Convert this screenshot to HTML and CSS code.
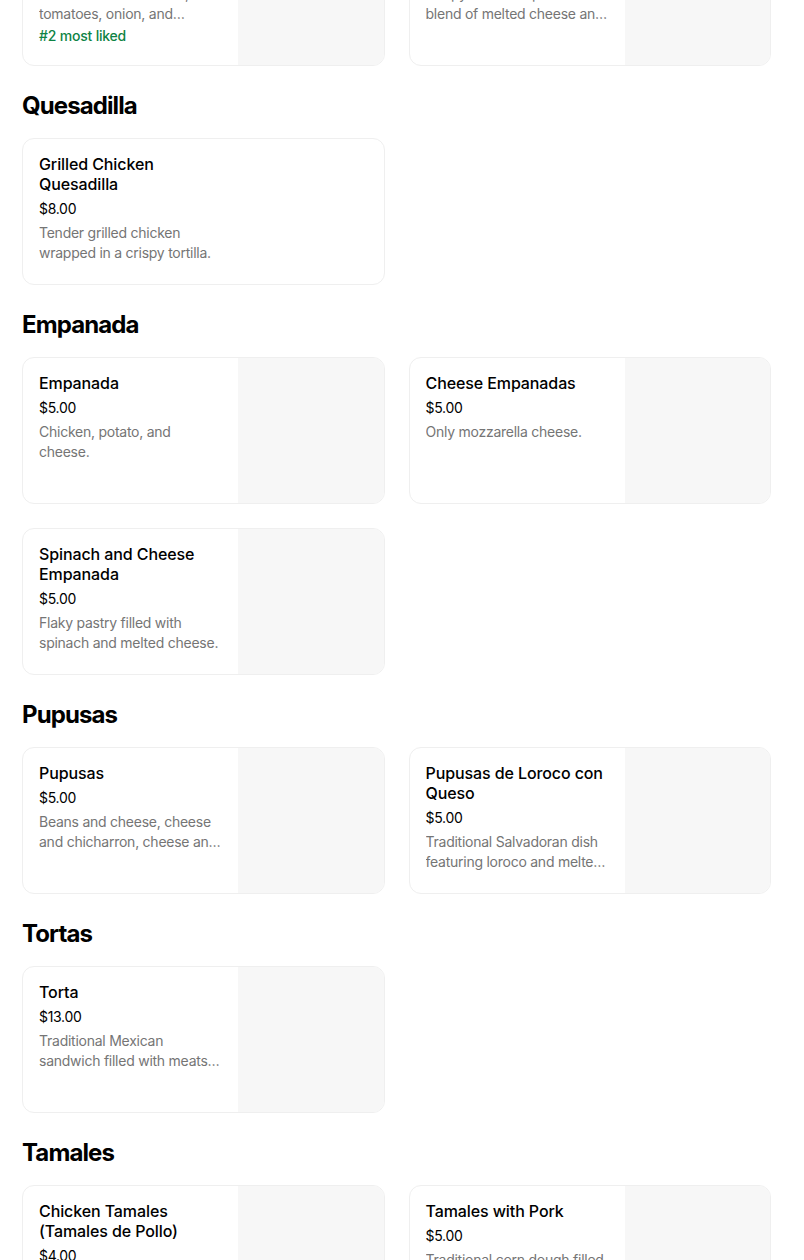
FILE: index.html
```html
<!DOCTYPE html>
<html lang="en">

<head>
    <meta charset="UTF-8">
    <meta name="viewport" content="width=device-width, initial-scale=1.0">
    <title>Menu</title>
    <link rel="stylesheet" href="styles.css">
</head>

<body>

    <div class="menu">

        <!-- first section is scrolled partly out of view -->
        <section class="section section-first">
            <div class="grid">
                <div class="card">
                    <div class="info">
                        <div class="title">Tacos de Asada</div>
                        <div class="price">$3.50</div>
                        <div class="desc">Grilled steak with salsa,<br>tomatoes, onion, and cilantro.</div>
                        <div class="liked">#2 most liked</div>
                    </div>
                    <div class="thumb"></div>
                </div>
                <div class="card">
                    <div class="info">
                        <div class="title">Nachos</div>
                        <div class="price">$9.00</div>
                        <div class="desc">Crispy tortilla chips with a<br>blend of melted cheese and beans.</div>
                    </div>
                    <div class="thumb"></div>
                </div>
            </div>
        </section>

        <section class="section">
            <h2>Quesadilla</h2>
            <div class="grid">
                <div class="card">
                    <div class="info">
                        <div class="title">Grilled Chicken Quesadilla</div>
                        <div class="price">$8.00</div>
                        <div class="desc">Tender grilled chicken wrapped in a crispy tortilla.</div>
                    </div>
                </div>
            </div>
        </section>

        <section class="section">
            <h2>Empanada</h2>
            <div class="grid">
                <div class="card">
                    <div class="info">
                        <div class="title">Empanada</div>
                        <div class="price">$5.00</div>
                        <div class="desc">Chicken, potato, and cheese.</div>
                    </div>
                    <div class="thumb"></div>
                </div>
                <div class="card">
                    <div class="info">
                        <div class="title">Cheese Empanadas</div>
                        <div class="price">$5.00</div>
                        <div class="desc">Only mozzarella cheese.</div>
                    </div>
                    <div class="thumb"></div>
                </div>
                <div class="card">
                    <div class="info">
                        <div class="title">Spinach and Cheese Empanada</div>
                        <div class="price">$5.00</div>
                        <div class="desc">Flaky pastry filled with spinach and melted cheese.</div>
                    </div>
                    <div class="thumb"></div>
                </div>
            </div>
        </section>

        <section class="section">
            <h2>Pupusas</h2>
            <div class="grid">
                <div class="card">
                    <div class="info">
                        <div class="title">Pupusas</div>
                        <div class="price">$5.00</div>
                        <div class="desc">Beans and cheese, cheese and chicharron, cheese and loroco, or revueltas.</div>
                    </div>
                    <div class="thumb"></div>
                </div>
                <div class="card">
                    <div class="info">
                        <div class="title">Pupusas de Loroco con Queso</div>
                        <div class="price">$5.00</div>
                        <div class="desc">Traditional Salvadoran dish featuring loroco and melted cheese.</div>
                    </div>
                    <div class="thumb"></div>
                </div>
            </div>
        </section>

        <section class="section">
            <h2>Tortas</h2>
            <div class="grid">
                <div class="card">
                    <div class="info">
                        <div class="title">Torta</div>
                        <div class="price">$13.00</div>
                        <div class="desc">Traditional Mexican sandwich filled with meats, beans, and avocado.</div>
                    </div>
                    <div class="thumb"></div>
                </div>
            </div>
        </section>

        <section class="section">
            <h2>Tamales</h2>
            <div class="grid">
                <div class="card">
                    <div class="info">
                        <div class="title">Chicken Tamales (Tamales de Pollo)</div>
                        <div class="price">$4.00</div>
                        <div class="desc">Corn dough filled with seasoned chicken and salsa.</div>
                    </div>
                    <div class="thumb"></div>
                </div>
                <div class="card">
                    <div class="info">
                        <div class="title">Tamales with Pork</div>
                        <div class="price">$5.00</div>
                        <div class="desc">Traditional corn dough filled with tender pork.</div>
                    </div>
                    <div class="thumb"></div>
                </div>
            </div>
        </section>

    </div>

</body>

</html>
```

FILE: styles.css
```css
body {
    margin: 0;
    background-color: #fff;
    color: #000;
    font-family: Inter, "Liberation Sans", sans-serif;
    overflow: hidden;
}

.menu {
    width: 749px;
    padding-left: 22px;
}

.section-first {
    margin-top: -81px;
}

h2 {
    margin: 24px 0 16px;
    font-size: 24px;
    line-height: 32px;
    font-weight: 700;
    letter-spacing: -0.9px;
}

.grid {
    display: grid;
    grid-template-columns: 1fr 1fr;
    gap: 24px;
}

.card {
    display: flex;
    height: 145px;
    border: 1px solid #efefef;
    border-radius: 12px;
    overflow: hidden;
}

/* text column keeps its width even when there is no picture */
.info {
    flex: 0 0 215px;
    box-sizing: border-box;
    padding: 15px 16px 16px;
}

.title {
    font-size: 16px;
    line-height: 20px;
    font-weight: 500;
    letter-spacing: -0.1px;
}

.price {
    margin-top: 5px;
    font-size: 14px;
    line-height: 20px;
    letter-spacing: -0.3px;
}

.desc {
    margin-top: 4px;
    font-size: 14px;
    line-height: 20px;
    letter-spacing: -0.25px;
    color: #757575;
    display: -webkit-box;
    -webkit-line-clamp: 2;
    -webkit-box-orient: vertical;
    overflow: hidden;
}

.liked {
    margin-top: 2px;
    font-size: 14px;
    line-height: 20px;
    font-weight: 500;
    letter-spacing: -0.2px;
    color: #0e8345;
}

.thumb {
    flex: 1;
    background-color: #f7f7f7;
}
```
